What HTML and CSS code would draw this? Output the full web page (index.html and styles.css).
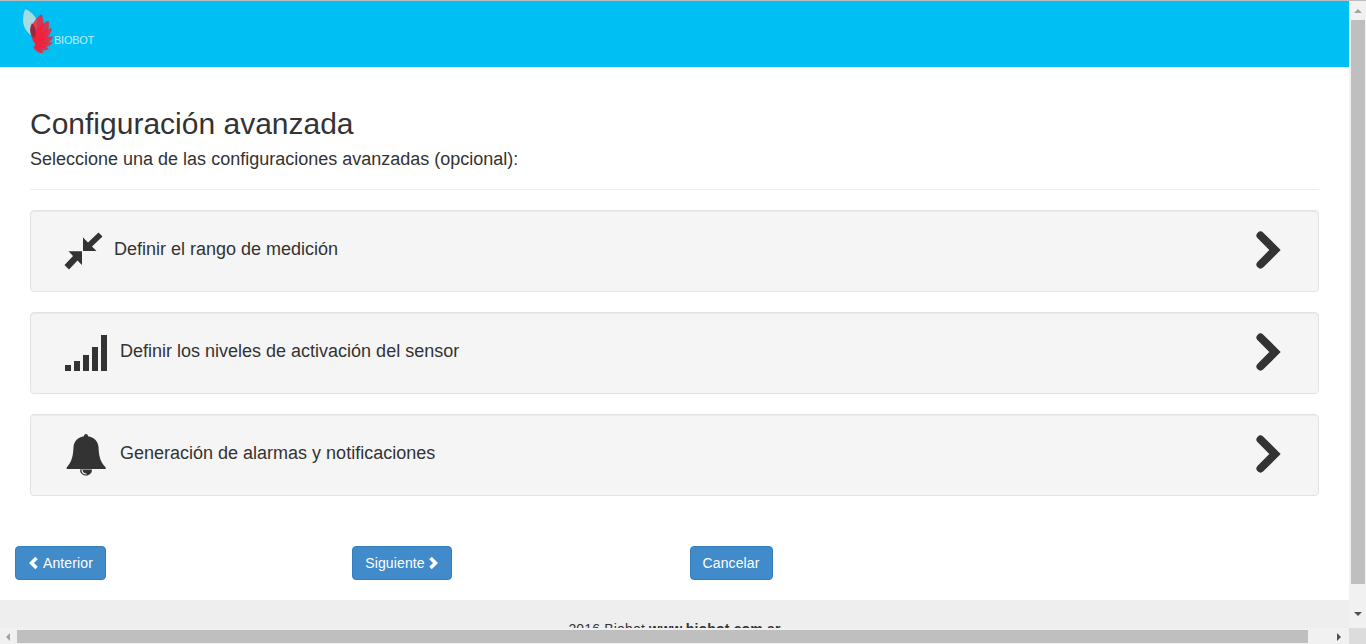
FILE: index.html
```html
<!DOCTYPE html>
<html lang="es">
<head>
<meta charset="utf-8">
<title>Biobot - Configuración avanzada</title>
<link rel="stylesheet" href="styles.css">
</head>
<body>
<div class="window">
  <div class="page">
    <header class="topbar">
      <div class="logo">
        <svg class="logo-mark" viewBox="22 8 33 47" width="33" height="47" aria-hidden="true">
          <path class="leaf" d="M25.300 9.300C32 12 37 17 37 24C37 29 36 34 34.700 37.500C28 34 23 28 23 20C23 15 24 12 25.300 9.300Z"/>
          <path class="petal" d="M33 41C28 30 33 20 41.500 14C45.500 22 43.500 33 36 43Z"/>
          <path class="petal" d="M33 41C35 31 40 24 48.500 20.500C50.500 29 46 38 36 44Z"/>
          <path class="petal" d="M34 42C38 34 45 29 51.800 28C51 36 45 42 36 45Z"/>
          <path class="petal" d="M35 43C41 38 47 36 53.300 36.500C51 43 43 46 36 46Z"/>
          <path class="petal" d="M35 44C41 42 47 42 53 42.500C48 48 41 49 36 47Z"/>
          <path class="petal" d="M35 45C40 45 45 46 49 48.500C44 52 38 51 35 48Z"/>
          <path class="petal" d="M35 45C38 47 42 50 43.500 52.800C39 54 35 51 33.500 47Z"/>
          <path class="petal-dark" d="M32 23C29 29 29.500 35 34.500 38.500C36.800 33 35.800 27 32 23Z"/>
        </svg>
        <span class="logo-text">BIOBOT</span>
      </div>
    </header>
    <main class="content">
      <h1 class="title">Configuración avanzada</h1>
      <p class="subtitle">Seleccione una de las configuraciones avanzadas (opcional):</p>
      <hr class="rule">
      <a class="option" href="#">
        <svg class="icon icon-resize" viewBox="64 231 40 40" aria-hidden="true">
          <path d="M83 237.500V251H96.500L92 246.500L102.500 236.500L98.500 232.500L88 242.500Z"/>
          <path d="M82 265V251.300H68.500L73 256L64.500 265L69 269.500L77.500 260.500Z"/>
        </svg>
        <span class="option-label">Definir el rango de medición</span>
        <svg class="chevron" viewBox="0 0 26 40" aria-hidden="true"><path d="M4.500 4.500L19 19L4.500 33.500"/></svg>
      </a>
      <a class="option" href="#">
        <svg class="icon icon-signal" viewBox="65 333 43 40" aria-hidden="true">
          <rect x="65" y="365" width="6" height="6"/>
          <rect x="74" y="361" width="6" height="10"/>
          <rect x="83" y="355" width="6" height="16"/>
          <rect x="92" y="347" width="6" height="24"/>
          <rect x="101" y="335" width="6" height="36"/>
        </svg>
        <span class="option-label">Definir los niveles de activación del sensor</span>
        <svg class="chevron" viewBox="0 0 26 40" aria-hidden="true"><path d="M4.500 4.500L19 19L4.500 33.500"/></svg>
      </a>
      <a class="option" href="#">
        <svg class="icon icon-bell" viewBox="65 433 43 44" aria-hidden="true">
          <path d="M86 434C87.500 434 88 435 88 436.300C94 437.500 98 441 98.500 447C99 455 99.500 461 105.700 467.500C106 468.500 105.500 469 105 469H67.500C66.700 469 66.400 468.500 66.700 467.500C72.500 461 73 455 73.500 447C74 441 78 437.500 84 436.300C84 435 84.500 434 86 434Z"/>
          <path d="M80 469.500H92C92 473 89.500 475.500 86 475.500C82.500 475.500 80 473 80 469.500Z"/>
          <path class="bell-gap" d="M82 470C82.200 472.500 84 474 86.500 474"/>
        </svg>
        <span class="option-label">Generación de alarmas y notificaciones</span>
        <svg class="chevron" viewBox="0 0 26 40" aria-hidden="true"><path d="M4.500 4.500L19 19L4.500 33.500"/></svg>
      </a>
    </main>
    <nav class="actions">
      <div class="action-col">
        <a class="btn" href="#"><svg class="btn-chevron" viewBox="0 0 11 14" aria-hidden="true"><path d="M8.500 2L3.500 7L8.500 12"/></svg> Anterior</a>
      </div>
      <div class="action-col">
        <a class="btn btn-next" href="#">Siguiente <svg class="btn-chevron" viewBox="0 0 11 14" aria-hidden="true"><path d="M2.500 2L7.500 7L2.500 12"/></svg></a>
      </div>
      <div class="action-col">
        <a class="btn" href="#">Cancelar</a>
      </div>
    </nav>
    <footer class="footer">
      <p class="footer-text">2016 Biobot <strong>www.biobot.com.ar</strong></p>
    </footer>
  </div>
  <div class="vscroll" aria-hidden="true">
    <span class="arrow arrow-up"></span>
    <span class="vthumb"></span>
    <span class="arrow arrow-down"></span>
  </div>
  <div class="hscroll" aria-hidden="true">
    <span class="arrow arrow-left"></span>
    <span class="hthumb"></span>
    <span class="arrow arrow-right"></span>
  </div>
  <div class="corner" aria-hidden="true"></div>
</div>
</body>
</html>
```
FILE: styles.css
```css
* { box-sizing: border-box; }
html, body { margin: 0; height: 100%; overflow: hidden; }
body { font-family: "Liberation Sans", Arial, sans-serif; color: #333; background: #fff; }

.window {
  height: 644px;
  border-top: 1px solid #bdbdbd;
  display: grid;
  grid-template-columns: 1349px 17px;
  grid-template-rows: 627px 16px;
}

.page { overflow: hidden; display: flex; flex-direction: column; }

.topbar { height: 66px; flex: none; background: #00bff3; padding: 7px 0 0 22px; }
.logo { display: flex; align-items: flex-start; }
.logo-mark { display: block; flex: none; }
.leaf { fill: #a6dbe2; }
.petal { fill: #f4203a; opacity: .85; }
.petal-dark { fill: #962a42; }
.logo-text { font-size: 11px; line-height: 13px; color: #bfeefa; margin: 26px 0 0 -1px; letter-spacing: -.25px; }

.content { padding: 40px 30px 0; flex: none; }
.title { margin: 0; font-size: 30px; line-height: 33px; font-weight: 400; }
.subtitle { margin: 8px 0 0; font-size: 18px; line-height: 22px; }
.rule { margin: 19px 0 20px; border: 0; border-top: 1px solid #eee; height: 1px; }

.option {
  display: flex;
  align-items: center;
  height: 82px;
  padding: 0 36px 0 33px;
  margin-bottom: 20px;
  background: #f5f5f5;
  border: 1px solid #e3e3e3;
  border-radius: 4px;
  color: #333;
  text-decoration: none;
  box-shadow: inset 0 1px 1px rgba(0,0,0,.05);
}
.option-label { font-size: 18px; line-height: 22px; flex: 1; margin-bottom: 5px; }
.icon { display: block; flex: none; fill: #333; height: auto; }
.icon-resize { width: 40px; margin-right: 10px; }
.icon-signal { width: 43px; margin: 0 12px 0 1px; }
.icon-bell { width: 43px; margin: 0 12px 0 1px; }
.bell-gap { fill: none; stroke: #f5f5f5; stroke-width: 1.200; }
.chevron { width: 26px; height: 40px; flex: none; fill: none; stroke: #333; stroke-width: 8; stroke-linejoin: miter; stroke-linecap: round; }

.actions { display: grid; grid-template-columns: repeat(4, 25%); margin-top: 30px; height: 54px; flex: none; }
.action-col { padding-left: 15px; }
.btn {
  display: inline-flex;
  align-items: center;
  gap: 4px;
  height: 34px;
  padding: 0 12px;
  font-size: 14px;
  letter-spacing: .12px;
  color: #fff;
  text-decoration: none;
  background: #428bca;
  border: 1px solid #357ebd;
  border-radius: 4px;
}
.btn-next { gap: 3px; }
.btn-chevron { width: 11px; height: 14px; fill: none; stroke: #fff; stroke-width: 3.500; }

.footer { flex: 1; background: #eee; padding-top: 19px; }
.footer-text { margin: 0; text-align: center; font-size: 14px; line-height: 20px; letter-spacing: .17px; }

.vscroll { background: #f1f1f1; display: flex; flex-direction: column; align-items: center; }
.vthumb { width: 14px; height: 564px; margin: 1px 0 0; background: #bfbfbf; flex: none; }
.hscroll { background: #f1f1f1; display: flex; align-items: center; padding-top: 1px; }
.hthumb { height: 13px; width: 1291px; background: #bfbfbf; flex: none; }
.corner { background: #dcdcdc; }
.arrow { width: 0; height: 0; border-style: solid; border-color: transparent; flex: none; }
.arrow-up { border-width: 0 4px 4px; border-bottom-color: #a3a3a3; margin: 8px 0 6px; }
.arrow-down { border-width: 4px 4px 0; border-top-color: #505050; margin-top: 28px; }
.arrow-left { border-width: 4px 4px 4px 0; border-right-color: #a3a3a3; margin: 0 7px 0 6px; }
.arrow-right { border-width: 4px 0 4px 4px; border-left-color: #505050; margin-left: 29px; }
```
